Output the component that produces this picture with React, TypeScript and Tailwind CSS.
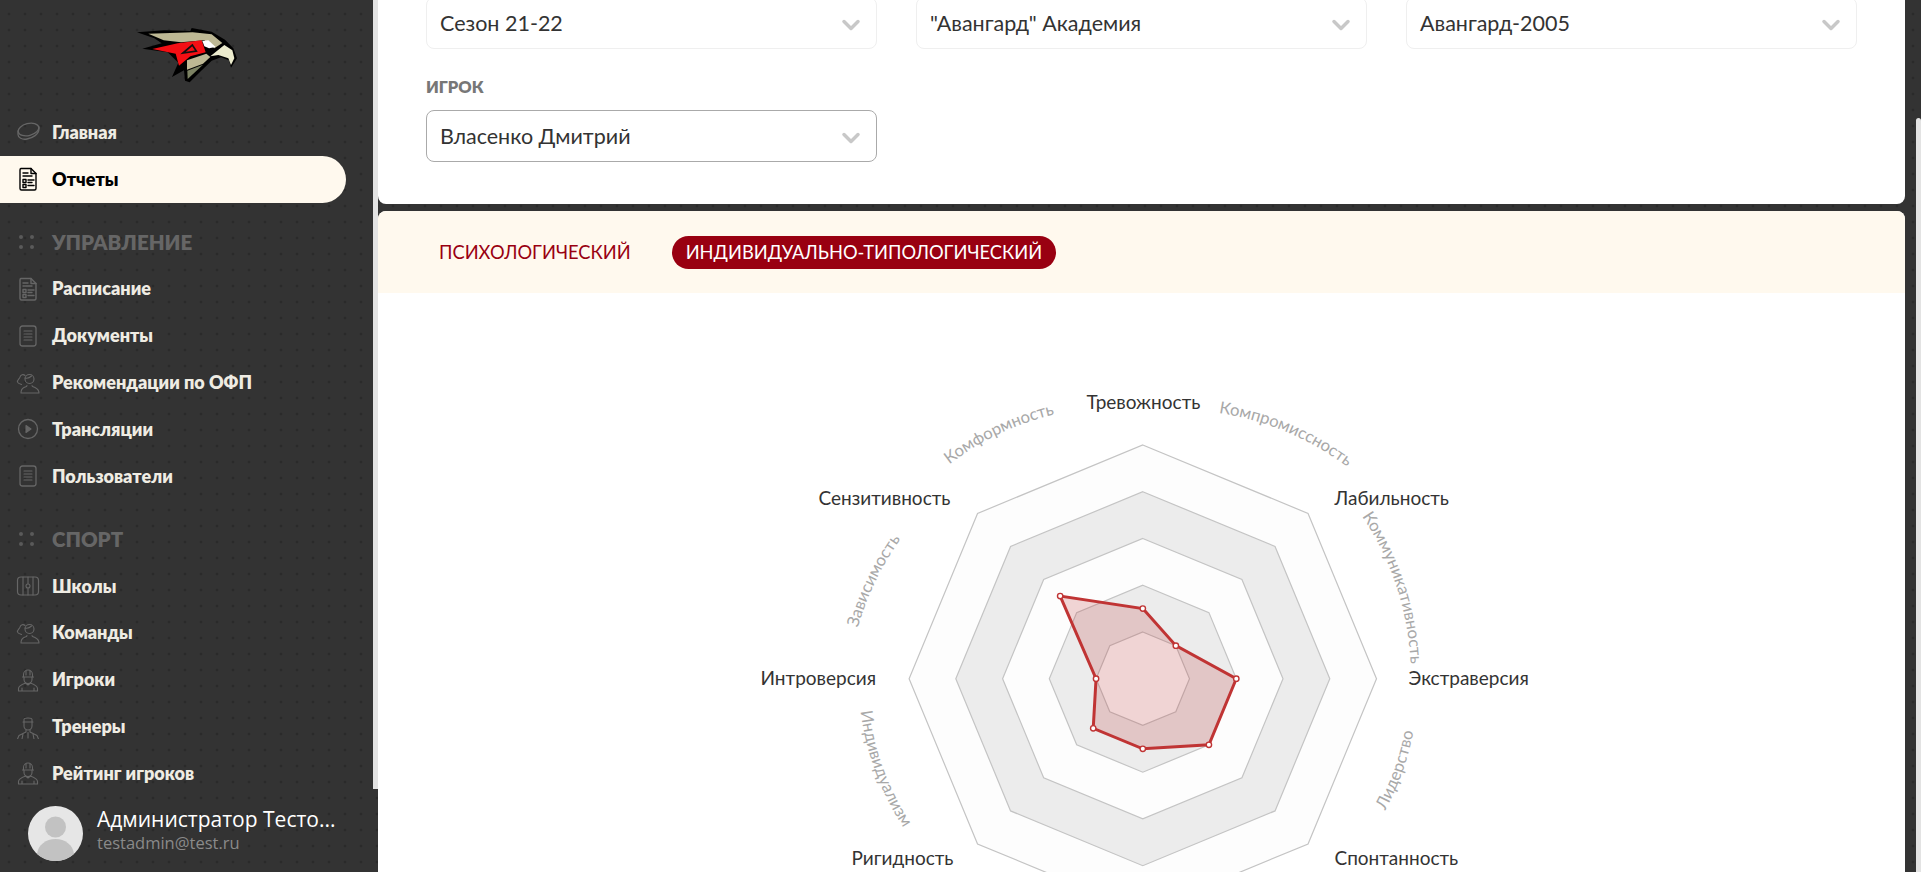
import type { ReactNode } from "react";
import { ChevronDown } from "lucide-react";

// ─── Icons ────────────────────────────────────────────────────────────────────
function Ico({ children }: { children: ReactNode }) {
  return (
    <svg viewBox="0 0 24 24" fill="none" stroke="currentColor" strokeWidth="1.1" strokeLinecap="round" strokeLinejoin="round" className="w-6 h-6 shrink-0">
      {children}
    </svg>
  );
}

const PuckIcon = () => (
  <Ico>
    <ellipse cx="12.5" cy="9.500" rx="10.500" ry="6" transform="rotate(-14 12.5 9.500)" strokeWidth="1.3" />
    <path d="M2 11v3.500c0 3 4 5.500 9 4.500 5.500-1 12-4.500 12-10.500V7" strokeWidth="1.3" />
  </Ico>
);
const ReportIcon = () => (
  <Ico>
    <path d="M5 1.5h10l5 5v15a1.5 1.5 0 0 1-1.5 1.5h-13A1.5 1.5 0 0 1 4 21.5V3a1.5 1.5 0 0 1 1-1.5z" strokeWidth="1.4" />
    <path d="M15 1.5v5h5M7 6h5M7 9h9M12 13h6M12 15.5h4M12 18.5h6" strokeWidth="1.4" />
    <rect x="7" y="12.5" width="3" height="3" strokeWidth="1.4" />
    <rect x="7" y="17.5" width="3" height="3" strokeWidth="1.4" />
  </Ico>
);
const DocIcon = () => (
  <Ico>
    <rect x="4" y="2" width="16" height="20" rx="2.5" strokeWidth="1.3" />
    <path d="M8 7h8M8 10h8M8 13h8M8 16h8" />
  </Ico>
);
const PeopleIcon = () => (
  <Ico>
    <circle cx="13.5" cy="8" r="4.5" />
    <path d="M9 7c2 .5 5-.5 6.5-2M5 22c0-1 0-4 3-5.500 1.500-.7 3-.5 3-2M16 14.500c0 1.500 1.500 1.300 3 2 3 1.500 4 4 4 5.500H5" />
    <path d="M9 4.500C7.500 3 4.500 3.500 4 6c-.3 1.500-3 3-2.500 5 .3 1.500 2.500 2 4 2.500" />
  </Ico>
);
const PlayIcon = () => (
  <Ico>
    <circle cx="12" cy="12" r="9.500" strokeWidth="1.3" />
    <path d="M10 8.500l5 3.500-5 3.500z" fill="currentColor" />
  </Ico>
);
const RinkIcon = () => (
  <Ico>
    <rect x="1.500" y="3" width="21" height="18" rx="3.500" strokeWidth="1.2" />
    <path d="M12 3v6.500M12 14.500V21M7 3v18M17 3v18" />
    <circle cx="12" cy="12" r="2" />
  </Ico>
);
const PlayerIcon = () => (
  <Ico>
    <path d="M7.500 9V6.500a4.500 4.500 0 0 1 9 0V9M6.500 9h11M8 9v2.500a4 4 0 0 0 8 0V9M10 3v4M14 3v4" />
    <path d="M9.500 15l2.500 2 2.500-2M2.500 23v-2.500c0-2.500 3-4 7-5.500M21.500 23v-2.500c0-2.500-3-4-7-5.500M2.500 23h19M6 23v-3M18 23v-3" />
  </Ico>
);
const CoachIcon = () => (
  <Ico>
    <path d="M8 7V4.500C8 2.500 16 2.500 16 4.500V7M7 7h10M8 7v4a4 4 0 0 0 8 0V7" />
    <path d="M10 15v2l-7 3.500L1.500 24M14 15v2l7 3.500 1.500 3.500M12 17.500V23M7 19l-1 5M17 19l1 5" />
  </Ico>
);

function Logo() {
  return (
    <svg viewBox="0 0 390 225" className="w-[130px] h-[75px]">
      <path d="M48 52 L130 46 L208 48 L212 39 L272 50 L312 74 L337 100 L348 130 L330 158 L324 136 L300 127 L272 137 L240 168 L206 202 L192 197 L189 166 L153 186 L172 143 L140 112 L64 101 L122 85 L100 70 Z" fill="#000" />
      <path d="M82 56 L215 52 L272 58 L304 84 L280 100 L250 76 L180 82 L128 76 Z" fill="#bdb894" />
      <path d="M94 102 L170 85 L242 76 L254 112 L208 124 L174 152 L164 116 Z" fill="#f40f14" />
      <path d="M186 114 L214 90 L226 108 Z" fill="none" stroke="#111" strokeWidth="5" />
      <path d="M244 78 L262 76 L284 96 L264 100 L250 94 Z" fill="#fff" />
      <path d="M268 124 L310 90 L334 106 L340 130 L330 150 L322 130 L292 120 Z" fill="#ecebcd" />
      <path d="M198 136 L256 116 L268 126 L246 146 L198 164 Z" fill="#bdb894" />
      <path d="M199 167 L246 149 L200 192 Z" fill="#7c8263" />
    </svg>
  );
}

// ─── Sidebar ──────────────────────────────────────────────────────────────────
function NavItem({ icon, label, active = false }: { icon: ReactNode; label: string; active?: boolean }) {
  return (
    <div
      className={`flex items-center h-[46.85px] pl-4 text-[18px] font-extrabold ${
        active ? "w-[346px] bg-[#fff9ee] rounded-r-full text-black" : "text-[#efece3]"
      }`}
    >
      <span className={active ? "text-black" : "text-[#666666]"}>{icon}</span>
      <span className="ml-3 whitespace-nowrap">{label}</span>
    </div>
  );
}

function Heading({ label }: { label: string }) {
  return (
    <div className="flex items-center h-[46.85px] mt-4 pl-[19px] text-[20.5px] font-extrabold text-[#666666]">
      <span className="grid grid-cols-2 gap-x-[7px] gap-y-[6px] w-[14px]">
        <i className="w-[4px] h-[4px] rounded-full bg-[#5a5a5a]" />
        <i className="w-[4px] h-[4px] rounded-full bg-[#5a5a5a]" />
        <i className="w-[4px] h-[4px] rounded-full bg-[#5a5a5a]" />
        <i className="w-[4px] h-[4px] rounded-full bg-[#5a5a5a]" />
      </span>
      <span className="ml-[19px]">{label}</span>
    </div>
  );
}

function Sidebar() {
  return (
    <aside className="w-[373px] h-full shrink-0 flex flex-col">
      <div className="flex-1 overflow-hidden">
        <div className="flex justify-center pt-[15px] pb-[19px] pr-[1px]">
          <Logo />
        </div>
        <NavItem icon={<PuckIcon />} label="Главная" />
        <NavItem icon={<ReportIcon />} label="Отчеты" active />
        <Heading label="УПРАВЛЕНИЕ" />
        <NavItem icon={<ReportIcon />} label="Расписание" />
        <NavItem icon={<DocIcon />} label="Документы" />
        <NavItem icon={<PeopleIcon />} label="Рекомендации по ОФП" />
        <NavItem icon={<PlayIcon />} label="Трансляции" />
        <NavItem icon={<DocIcon />} label="Пользователи" />
        <Heading label="СПОРТ" />
        <NavItem icon={<RinkIcon />} label="Школы" />
        <NavItem icon={<PeopleIcon />} label="Команды" />
        <NavItem icon={<PlayerIcon />} label="Игроки" />
        <NavItem icon={<CoachIcon />} label="Тренеры" />
        <NavItem icon={<PlayerIcon />} label="Рейтинг игроков" />
      </div>
      <div className="h-[83px] shrink-0 flex items-start pt-[17px] pl-7 gap-[14px] font-['Open_Sans',sans-serif]">
        <svg viewBox="0 0 55 55" className="w-[55px] h-[55px] shrink-0">
          <circle cx="27.500" cy="27.500" r="27.500" fill="#e6e6e6" />
          <circle cx="27.500" cy="21" r="10.500" fill="#c2c2c2" />
          <path d="M9 48c1-9 9-15 18.500-15S45 39 46 48a27.500 27.500 0 0 1-37 0z" fill="#c2c2c2" />
        </svg>
        <div className="-mt-[1px]">
          <div className="text-[21px] leading-[28px] text-white whitespace-nowrap">Администратор Тесто...</div>
          <div className="text-[16.5px] leading-[20px] text-[#8a8a8a]">testadmin@test.ru</div>
        </div>
      </div>
    </aside>
  );
}

// ─── Form ─────────────────────────────────────────────────────────────────────
function Select({ value, strong = false, className = "" }: { value: string; strong?: boolean; className?: string }) {
  return (
    <div
      className={`flex items-center justify-between h-[52px] pl-[13px] pr-[11px] rounded-lg border bg-white text-[21.5px] text-[#333333] ${
        strong ? "border-[#aaaaaa]" : "border-[#efefef]"
      } ${className}`}
    >
      <span>{value}</span>
      <ChevronDown className="w-7 h-7 mt-[3px] text-[#c8c8c8]" strokeWidth={3} />
    </div>
  );
}

// ─── Radar chart ──────────────────────────────────────────────────────────────
const CX = 1142.3;
const CY = 678.7;
const UNIT = 23.37;

function pt(r: number, i: number) {
  const a = (i * Math.PI) / 4 - Math.PI / 2;
  return [CX + r * Math.cos(a), CY + r * Math.sin(a)];
}

function ring(r: number) {
  return [0, 1, 2, 3, 4, 5, 6, 7].map(i => pt(r, i).join(",")).join(" ");
}

const VALUES = [3, 2, 4, 4, 3, 3, 2, 5];

const AXES = [
  { label: "Тревожность", x: 1086, y: 409 },
  { label: "Лабильность", x: 1334, y: 505 },
  { label: "Экстраверсия", x: 1408, y: 685 },
  { label: "Спонтанность", x: 1334, y: 865 },
  { label: "Ригидность", x: 851, y: 865 },
  { label: "Интроверсия", x: 760, y: 685 },
  { label: "Сензитивность", x: 818, y: 505 },
];

const ARCS = [
  { id: "a1", label: "Комформность", d: "M948 465 A285 285 0 0 1 1055 414" },
  { id: "a2", label: "Компромиссность", d: "M1218 413 A285 285 0 0 1 1347 467" },
  { id: "a3", label: "Коммуникативность", d: "M1362 517 A285 285 0 0 1 1410 663" },
  { id: "a4", label: "Лидерство", d: "M1385 810 A285 285 0 0 0 1413 732" },
  { id: "a5", label: "Зависимость", d: "M857 629 A285 285 0 0 1 901 538" },
  { id: "a6", label: "Индивидуализм", d: "M860 711 A285 285 0 0 0 903 828" },
];

function Radar() {
  const data = VALUES.map((v, i) => pt(v * UNIT, i));
  return (
    <svg viewBox="641.5 293 1000 700" className="w-[1000px] h-[700px] mx-auto shrink-0">
      {[233.7, 187, 140.2, 93.5, 46.7].map((r, i) => (
        <polygon key={r} points={ring(r)} fill={i % 2 ? "#ececec" : "#fdfdfd"} stroke="#c4c4c4" strokeWidth="1.2" />
      ))}
      <polygon
        points={data.map(p => p.join(",")).join(" ")}
        fill="rgba(192,52,52,0.2)"
        stroke="#c03434"
        strokeWidth="3"
      />
      {data.map(([x, y], i) => (
        <circle key={i} cx={x} cy={y} r="2.700" fill="#fff" stroke="#c03434" strokeWidth="1.400" />
      ))}
      {AXES.map(a => (
        <text key={a.label} x={a.x} y={a.y} fontSize="19" fill="#333333">
          {a.label}
        </text>
      ))}
      {ARCS.map(a => (
        <g key={a.id}>
          <path id={a.id} d={a.d} fill="none" />
          <text fontSize="16.7" fill="#a8a8a8" textAnchor="middle">
            <textPath href={`#${a.id}`} startOffset="50%">
              {a.label}
            </textPath>
          </text>
        </g>
      ))}
    </svg>
  );
}

// ─── Main Component ───────────────────────────────────────────────────────────
export default function App() {
  return (
    <div className="flex h-screen overflow-hidden font-['Lato',sans-serif] bg-[#333333] bg-[radial-gradient(circle,#2a2a2a_1.2px,transparent_1.700px)] bg-[length:16px_16px] bg-[position:1px_6px]">
      <Sidebar />
      <div className="w-[5px] h-[789px] shrink-0 bg-[#e3e3e3]" />

      <main className="flex-1 min-w-0 flex flex-col">
        <section className="h-[204px] shrink-0 bg-white rounded-b-lg px-12">
          <div className="grid grid-cols-3 gap-x-[39px] -mt-[3px]">
            <Select value="Сезон 21-22" />
            <Select value={'"Авангард" Академия'} />
            <Select value="Авангард-2005" />
          </div>
          <div className="mt-[30px] mb-[14px] text-[16.5px] leading-[17px] font-extrabold text-[#777777]">ИГРОК</div>
          <div className="grid grid-cols-3 gap-x-[39px]">
            <Select value="Власенко Дмитрий" strong />
          </div>
        </section>

        <section className="flex-1 min-h-0 mt-[7px] rounded-t-lg overflow-hidden bg-white flex flex-col">
          <div className="h-[82px] shrink-0 bg-[#fff9ee] flex items-start gap-[27px] pt-[25px] pl-[47px] text-[18.3px]">
            <div className="h-[33px] px-[14px] flex items-center rounded-full text-[#990011]">ПСИХОЛОГИЧЕСКИЙ</div>
            <div className="h-[33px] px-[14px] flex items-center rounded-full bg-[#990011] text-white">ИНДИВИДУАЛЬНО-ТИПОЛОГИЧЕСКИЙ</div>
          </div>
          <Radar />
        </section>
      </main>

      <div className="w-[11px] shrink-0" />
      <div className="w-[5px] h-full shrink-0 pt-[118px]">
        <div className="h-full bg-[#e3e3e3] rounded-t-sm" />
      </div>
    </div>
  );
}
